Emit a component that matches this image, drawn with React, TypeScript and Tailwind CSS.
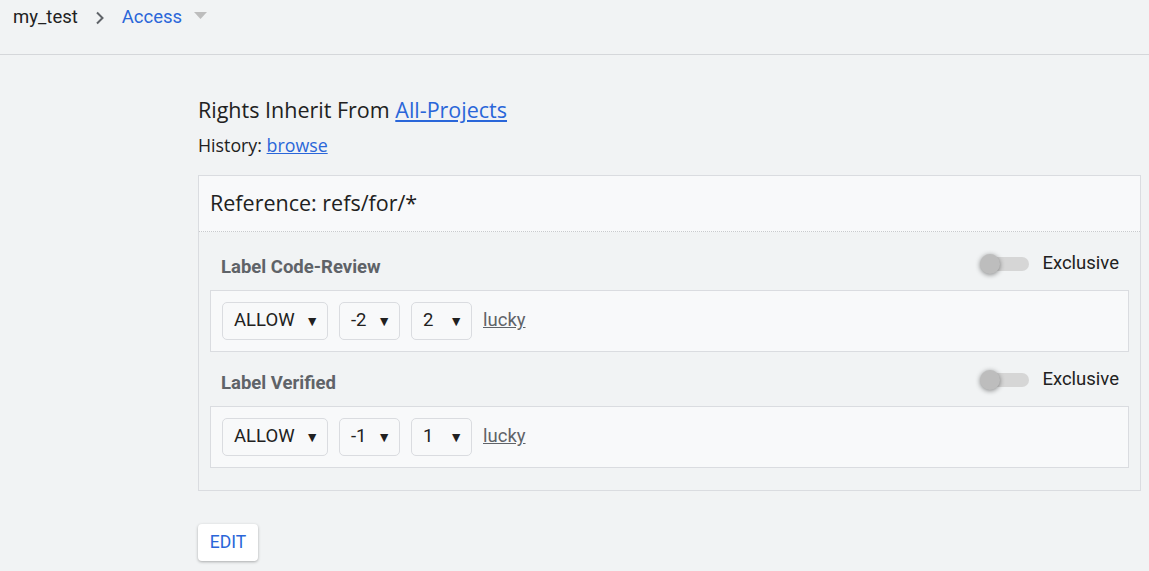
import { useState } from "react";

const font = { fontFamily: "Roboto, 'Liberation Sans', sans-serif" };
const headFont = { fontFamily: "'Open Sans', 'Noto Sans', sans-serif" };

type Rule = {
	label: string;
	action: string;
	min: string;
	max: string;
	group: string;
};

const rules: Rule[] = [
	{ label: "Label Code-Review", action: "ALLOW", min: "-2", max: "2", group: "lucky" },
	{ label: "Label Verified", action: "ALLOW", min: "-1", max: "1", group: "lucky" },
];

const FakeSelect = ({ value, width }: { value: string; width: string }) => (
	<div
		className={`${width} h-[38px] flex items-center justify-between pl-[11px] pr-[8px] border border-[#dadce0] rounded-[5px] bg-[#f8f9fa] text-[18.5px] text-[#212121]`}
	>
		<span>{value}</span>
		<span className="text-[14px] text-[#212121]">▼</span>
	</div>
);

const Toggle = ({ on, onClick }: { on: boolean; onClick: () => void }) => (
	<button onClick={onClick} className="relative w-[50px] h-[22px] flex items-center">
		<span className="absolute left-[5px] right-0 h-[14px] rounded-full bg-[#d6d6d6]" />
		<span
			className={`absolute top-[1px] w-[20px] h-[20px] rounded-full bg-[#bdbdbd] shadow-[0_1px_5px_rgba(0,0,0,0.45)] ${
				on ? "left-[30px]" : "left-[1px]"
			}`}
		/>
	</button>
);

const RuleSection = ({ rule, first }: { rule: Rule; first: boolean }) => {
	const [exclusive, setExclusive] = useState(false);
	return (
		<div className={first ? "pt-[4px]" : ""}>
			<div className="h-[54px] flex items-center justify-between pl-[11px] pr-[10px] pt-[2px]">
				<div className="mt-[8px] text-[18.5px] font-bold text-[#5f6368]">{rule.label}</div>
				<div className="flex items-center gap-[13px]">
					<Toggle on={exclusive} onClick={() => setExclusive(!exclusive)} />
					<span className="text-[18.5px] text-[#212121]">Exclusive</span>
				</div>
			</div>
			<div className="h-[62px] flex items-center gap-[11px] px-[11px] border border-[#dadce0] bg-[#f8f9fa]">
				<FakeSelect value={rule.action} width="w-[106px]" />
				<FakeSelect value={rule.min} width="w-[61px]" />
				<FakeSelect value={rule.max} width="w-[61px]" />
				<a href="#" className="text-[18.5px] text-[#5f6368] underline">
					{rule.group}
				</a>
			</div>
		</div>
	);
};

export default function App() {
	return (
		<div className="min-h-[571px] bg-[#f1f3f4] text-[#212121]" style={font}>
			{/* breadcrumb */}
			<div className="h-[55px] border-b border-[#d5d7da] flex items-start pt-[5px] pl-[13px]">
				<div className="h-[26px] flex items-center text-[18.5px]">
					<span className="text-[#212121]">my_test</span>
					<svg className="w-[12px] h-[14px] ml-[16px] mr-[16px]" viewBox="0 0 12 14">
						<path d="M3 1.5 L8.5 7 L3 12.5" fill="none" stroke="#5f6368" strokeWidth="2" />
					</svg>
					<span className="text-[#2a66d9]">Access</span>
					<svg className="w-[13px] h-[8px] ml-[12px] mb-[4px]" viewBox="0 0 13 8">
						<path d="M0 0 L13 0 L6.5 7 Z" fill="#bdbdbd" />
					</svg>
				</div>
			</div>

			<div className="pl-[198px] pr-[8px]">
				<div className="mt-[41px] h-[28px] flex items-center text-[21.5px]" style={headFont}>
					Rights Inherit From&nbsp;
					<a href="#" className="text-[#2a66d9] underline">
						All-Projects
					</a>
				</div>
				<div className="mt-[9px] h-[24px] flex items-center text-[17.8px]" style={headFont}>
					History:&nbsp;
					<a href="#" className="text-[#2a66d9] underline">
						browse
					</a>
				</div>

				<div className="mt-[18px] border border-[#dadce0]">
					<div
						className="h-[56px] flex items-center px-[11px] bg-[#f8f9fa] border-b border-dotted border-[#c8cacd] text-[21.5px]"
						style={headFont}
					>
						Reference: refs/for/*
					</div>
					<div className="px-[11px] pb-[22px] bg-[#f1f3f4]">
						{rules.map((r, i) => (
							<RuleSection key={r.label} rule={r} first={i === 0} />
						))}
					</div>
				</div>

				<button className="mt-[33px] w-[60px] h-[37px] bg-white rounded-[4px] shadow-[0_1px_3px_rgba(0,0,0,0.3)] text-[17.5px] text-[#2a66d9]">
					EDIT
				</button>
			</div>
		</div>
	);
}
